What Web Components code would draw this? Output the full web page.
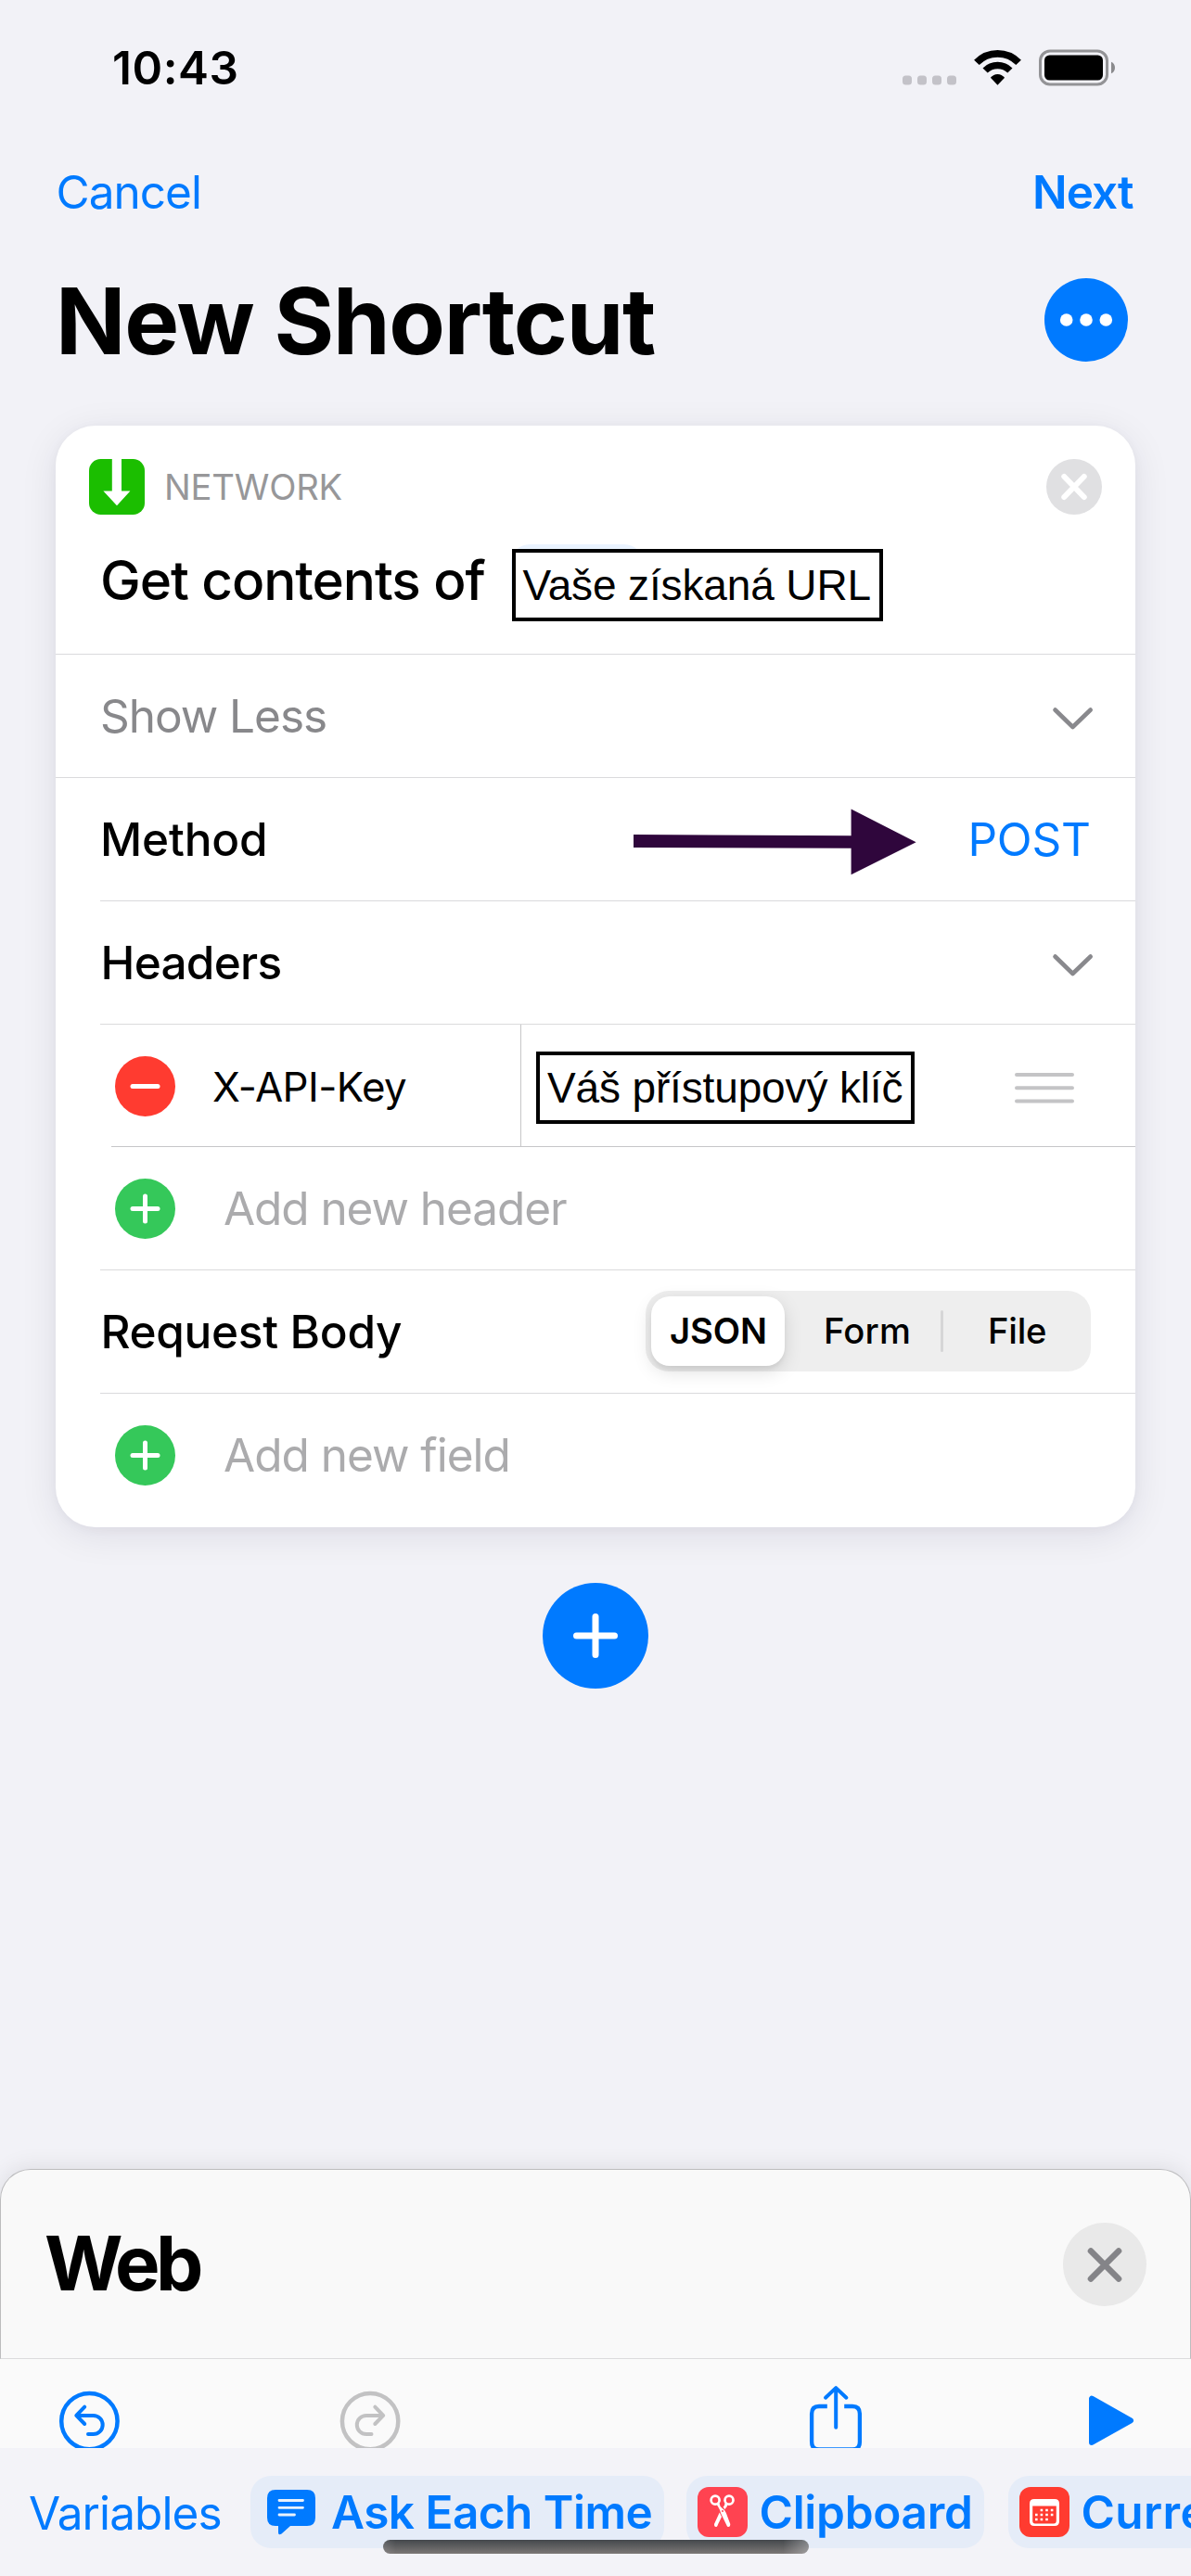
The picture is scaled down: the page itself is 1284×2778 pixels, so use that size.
<!DOCTYPE html>
<html lang="en">
<head>
<meta charset="utf-8">
<title>New Shortcut</title>
<style>
html,body{margin:0;padding:0;background:#f2f2f7}
body{font-family:Inter,"Liberation Sans",sans-serif;color:#000}
</style>
</head>
<body>
<shortcut-editor></shortcut-editor>
<script>
const define = (name, html, extra) => {
  const tpl = document.createElement('template');
  tpl.innerHTML = html;
  customElements.define(name, class extends HTMLElement {
    constructor() {
      super();
      this.attachShadow({ mode: 'open' }).appendChild(tpl.content.cloneNode(true));
    }
    connectedCallback() { if (extra) extra(this); }
  });
};

/* Single-line label whose glyphs span exactly `w` pixels, tracked by letter-spacing. */
const ruler = document.createElement('canvas').getContext('2d');
define('ui-text', `<style>
:host{display:block;flex:none;white-space:nowrap;line-height:1.2;font-size:49.5px;padding-top:2px}
:host([size=title]){font-size:99px;font-weight:700}
:host([size=sheet]){font-size:81.5px;font-weight:700;padding-top:0}
:host([size=summary]){font-size:58.5px;font-weight:500}
:host([size=field]){font-size:43.8px}
:host([size=small]){font-size:38.2px;padding-top:1px}
:host([size=note]){font-size:46px;font-family:"Liberation Sans",sans-serif}
:host([weight="500"]){font-weight:500}
:host([weight="600"]){font-weight:600}
:host([tone=blue]){color:#007aff}
:host([tone=gray]){color:#88888b}
:host([tone=soft]){color:#979799}
:host([tone=hint]){color:#ababad}
span{display:block}
</style><span><slot></slot></span>`, el => {
  const cs = getComputedStyle(el), text = el.textContent, w = +el.getAttribute('w');
  ruler.font = `${cs.fontWeight} ${cs.fontSize} ${cs.fontFamily}`;
  const m = ruler.measureText(text);
  const ink = m.actualBoundingBoxLeft + m.actualBoundingBoxRight;
  el.style.width = w + 'px';
  const span = el.shadowRoot.querySelector('span');
  span.style.marginLeft = m.actualBoundingBoxLeft + 'px';
  span.style.letterSpacing = ((w - ink) / (text.length - 1)).toFixed(3) + 'px';
});

define('status-bar', `<style>
:host{display:flex;height:145px;align-items:center;padding:0 82px 0 123px;box-sizing:border-box}
.right{margin-left:auto;display:flex;align-items:center}
svg{display:block}
</style>
<ui-text w="131.5" weight="600">10:43</ui-text>
<div class="right"><svg width="230" height="40" viewBox="972 52.5 230 40">
<g fill="#c3c2c8"><rect x="973" y="81" width="10" height="10" rx="3.5"/><rect x="989" y="81" width="10" height="10" rx="3.5"/><rect x="1005" y="81" width="10" height="10" rx="3.5"/><rect x="1021" y="81" width="10" height="10" rx="3.5"/></g>
<g fill="none" stroke="#000"><path stroke-width="7.8" d="M1052.9 66.9A31.4 31.4 0 0 1 1098.1 66.9"/><path stroke-width="7.4" d="M1062.1 75.5A19 19 0 0 1 1088.9 75.5"/></g>
<path d="M1075.5 91.2L1067.9 83.2Q1071 79.4 1075.5 79.4Q1080 79.4 1083.1 83.2Z"/>
<rect x="1121.5" y="54.5" width="72" height="36" rx="10.5" fill="none" stroke="#939396" stroke-width="3"/>
<rect x="1126" y="59" width="63" height="27" rx="5.5"/>
<path fill="#8a8a8d" d="M1198 66.2Q1202 68 1202 72.5Q1202 77 1198 78.8Z"/></svg></div>`);

define('nav-bar', `<style>
:host{display:flex;height:124px;align-items:center;justify-content:space-between;padding:0 62px 0 62.5px}
</style><ui-text w="152.5" tone="blue">Cancel</ui-text><ui-text w="106" tone="blue" weight="600">Next</ui-text>`);

define('title-bar', `<style>
:host{display:flex;height:152px;align-items:center;justify-content:space-between;padding:0 68px 0 66px}
svg{display:block}
</style><ui-text w="640" size="title">New Shortcut</ui-text>
<svg width="90" height="90"><circle cx="45" cy="45" r="45" fill="#007aff"/><g fill="#fff"><circle cx="23.7" cy="45" r="6.8"/><circle cx="45" cy="45" r="6.8"/><circle cx="66.3" cy="45" r="6.8"/></g></svg>`);

define('note-box', `<style>
:host{display:flex;flex:none;box-sizing:border-box;width:400px;height:78px;border:4px solid #000;background:#fff;align-items:center;padding:0 0 1px 8px}
:host([wide]){width:408px}
</style><slot></slot>`);

define('list-row', `<style>
:host{display:flex;flex:none;box-sizing:border-box;height:133px;align-items:center;margin-left:48px;border-bottom:1px solid #dadadc}
:host([full]){margin-left:0;padding-left:50px}
:host([last]){border-color:transparent}
:host([entry]){height:132px;margin-left:60px;border-color:#c6c6c8}
::slotted([end]){margin-left:auto}
</style><slot></slot>`);

define('chevron-down', `<style>:host{display:block;margin:5px 45px 0 0}svg{display:block}</style>
<svg width="46" height="28"><path d="M4.5 4.5L23.5 23L42.7 4.5" fill="none" stroke="#89898d" stroke-width="4.6" stroke-linecap="round" stroke-linejoin="round"/></svg>`);

define('round-mark', `<style>
:host{display:block;flex:none}svg{display:block}
circle{fill:#35c85a}.v{display:inline}
:host([minus]) circle{fill:#ff3b30}:host([minus]) .v{display:none}
</style><svg width="65" height="65"><circle cx="32.5" cy="32.5" r="32.5"/><g stroke="#fff" stroke-width="5" stroke-linecap="round"><path d="M19 32.5H46"/><path class="v" d="M32.5 19V46"/></g></svg>`);

define('segmented-control', `<style>
:host{display:flex;box-sizing:border-box;width:480px;height:87px;padding:6px;border-radius:25px;background:#eee;align-items:center;margin:0 48px 2px 0}
.on{display:flex;width:144px;height:75px;border-radius:20px;background:#fff;align-items:center;justify-content:center;box-shadow:0 6px 20px rgba(0,0,0,.13),0 4px 4px rgba(0,0,0,.05)}
.form{margin-left:45px}.file{margin-left:51px}
i{display:block;width:3px;height:45px;border-radius:2px;background:#d6d6d7;margin-left:34px}
</style><div class="on"><ui-text w="102" size="small" weight="600">JSON</ui-text></div>
<ui-text class="form" w="89" size="small" weight="500">Form</ui-text><i></i>
<ui-text class="file" w="59" size="small" weight="500">File</ui-text>`);

define('action-card', `<style>
:host{display:block;flex:none;width:1164px;height:1188px;margin:38px 60px 0;border-radius:43px;background:#fff;box-shadow:0 8px 40px rgba(20,10,50,.09),0 2px 12px rgba(20,10,50,.04)}
svg{display:block}
header{border-bottom:1px solid #dadadc;padding:36px 36px 0;height:210px}
.top{display:flex;height:60px;align-items:center}
.top ui-text{margin-left:24px}
.top svg:last-child{margin-left:auto}
.sum{display:flex;align-items:center;margin:37px 0 0 15px;height:78px}
.sum ui-text[size=summary]{margin-bottom:11px}
.url{position:relative;margin-left:28px}
.url::before{content:"";position:absolute;left:-1px;top:-5px;width:142px;height:74px;border-radius:20px;background:#eaf3ff}
.url note-box{position:relative}
.arrow{margin:6px 0 0 397px}
.post{margin-right:50px}
.key{display:flex;align-items:center;box-sizing:border-box;width:441px;padding:2px 0 0 4px}
.key ui-text{margin:2px 0 0 41px}
.val{display:flex;flex:1;align-self:stretch;align-items:center;border-left:1px solid #c6c6c8;padding:4px 66px 0 16px;margin-bottom:-1px}
.val svg{margin-left:auto}
</style>
<header>
<div class="top"><svg width="60" height="60"><rect width="60" height="60" rx="12.5" fill="#1bbe00"/><path d="M24.8 0H35V34.5H44.4L30 50.3L15.4 34.5H24.8Z" fill="#fff"/></svg>
<ui-text w="188.5" size="small" tone="soft">NETWORK</ui-text>
<svg width="60" height="60"><circle cx="30" cy="30" r="30" fill="#e0e0e2"/><path d="M19.3 19L40.7 41M40.7 19L19.3 41" stroke="#fff" stroke-width="6" stroke-linecap="round"/></svg></div>
<div class="sum"><ui-text w="412.5" size="summary">Get contents of</ui-text><div class="url"><note-box><ui-text w="375" size="note">Vaše získaná URL</ui-text></note-box></div></div>
</header>
<list-row full><ui-text w="241" tone="gray">Show Less</ui-text><chevron-down end></chevron-down></list-row>
<list-row><ui-text style="margin-left:3px" w="175" weight="500">Method</ui-text>
<svg class="arrow" width="306" height="72" viewBox="683 872 306 72"><path fill="#2f063c" d="M683 900L917.6 901.2V872.6L987.6 908.2L917.6 943.3V914.8L683 914Z"/></svg>
<ui-text end class="post" w="126.5" tone="blue">POST</ui-text></list-row>
<list-row><ui-text style="margin-left:3.5px" w="191" weight="500">Headers</ui-text><chevron-down end></chevron-down></list-row>
<list-row entry><div class="key"><round-mark minus></round-mark><ui-text w="208" size="field">X-API-Key</ui-text></div>
<div class="val"><note-box wide><ui-text w="382.5" size="note">Váš přístupový klíč</ui-text></note-box>
<svg width="64" height="36"><path d="M2 4H62M2 18.3H62M2 32.6H62" stroke="#c4c4c6" stroke-width="4" stroke-linecap="round"/></svg></div></list-row>
<list-row><round-mark style="margin-left:16px"></round-mark><ui-text style="margin-left:53px" w="369" tone="hint">Add new header</ui-text></list-row>
<list-row><ui-text style="margin-left:3.5px" w="321.5" weight="500">Request Body</ui-text><segmented-control end></segmented-control></list-row>
<list-row last><round-mark style="margin-left:16px"></round-mark><ui-text style="margin-left:53px" w="305.5" tone="hint">Add new field</ui-text></list-row>`);

define('add-button', `<style>:host{display:block;align-self:center;margin-top:60px}svg{display:block}</style>
<svg width="114" height="114"><circle cx="57" cy="57" r="57" fill="#007aff"/><path d="M36.5 57H77.5M57 36.5V77.5" stroke="#fff" stroke-width="7" stroke-linecap="round"/></svg>`);

define('search-sheet', `<style>
:host{display:flex;box-sizing:border-box;height:205px;margin-top:auto;align-items:center;justify-content:space-between;padding:1px 47px 0 49px;background:#f9f9f9;border:1px solid #bcbcbe;border-bottom-color:#dcdcdd;border-radius:33px 33px 0 0;box-shadow:0 -2px 24px rgba(0,0,0,.09)}
svg{display:block}
</style><ui-text w="168" size="sheet" style="margin:0 0 2px -1px">Web</ui-text>
<svg width="90" height="90"><circle cx="45" cy="45" r="45" fill="#e9e9e9"/><path d="M30 30.5L60 60.5M60 30.5L30 60.5" stroke="#848488" stroke-width="6.6" stroke-linecap="round"/></svg>`);

define('tool-bar', `<style>
:host{display:block;position:relative;height:96px;overflow:hidden;background:#fafafa}
div{display:flex;height:133px;align-items:center;padding-left:63px}
svg{display:block;flex:none;fill:none;stroke:#007aff;stroke-linecap:round;stroke-linejoin:round}
</style><div>
<svg width="66" height="80" viewBox="63 2570.5 66 80" stroke-width="4"><circle cx="96.4" cy="2610.6" r="30.2" stroke-width="4.5"/><path d="M91.2 2595.2L82.3 2604.4L91.2 2613.5M83 2604.4H100.6A10.1 10.1 0 0 1 100.6 2624.6H95"/></svg>
<svg width="66" height="80" viewBox="63 2570.5 66 80" stroke-width="4" style="margin-left:237px;stroke:#c2c2c3"><g transform="translate(192.5 0) scale(-1 1)"><circle cx="96.4" cy="2610.6" r="30.2" stroke-width="4.5"/><path d="M91.2 2595.2L82.3 2604.4L91.2 2613.5M83 2604.4H100.6A10.1 10.1 0 0 1 100.6 2624.6H95"/></g></svg>
<svg width="66" height="80" viewBox="868 2570.5 66 80" stroke-width="4" style="margin-left:436px"><path d="M901.2 2575V2617.2M890 2585.2L901.2 2574.6L912.4 2585.2"/><path stroke-linecap="butt" stroke-width="4.3" d="M891.8 2594.5H883Q875.1 2594.5 875.1 2602.5V2633Q875.1 2641 883 2641H919Q926.9 2641 926.9 2633V2602.5Q926.9 2594.5 919 2594.5H910.2"/></svg>
<svg width="66" height="80" viewBox="1165 2570.5 66 80" stroke-width="6" style="margin-left:231px"><path fill="#007aff" d="M1177 2586.2V2633.4L1219 2609.8Z"/></svg>
</div>`);

define('variable-chip', `<style>
:host{display:flex;flex:none;box-sizing:border-box;height:78px;border-radius:22px;background:#e5ecf8;align-items:center;padding-left:12px}
</style><slot></slot>`);

define('variable-bar', `<style>
:host{display:flex;position:relative;box-sizing:border-box;height:138px;padding:30px 0 0 32px;overflow:hidden;background:#f3f3f8;align-items:flex-start}
svg{display:block;flex:none}
.vars{margin-top:8.5px}
.home{position:absolute;left:413px;top:99px;width:459px;height:15px;border-radius:7.5px;background:linear-gradient(90deg,rgba(243,243,248,.12),transparent 3%,transparent 94%,rgba(243,243,248,.32)),linear-gradient(#44484c,#7b7776)}
</style>
<ui-text class="vars" w="205.5" tone="blue">Variables</ui-text>
<variable-chip style="width:446px;margin-left:32.5px;padding-left:18px"><svg width="52" height="49"><path fill="#007aff" d="M9 0H43Q52 0 52 9V30Q52 39 43 39H25L15.5 47.5Q12 49.5 12 46V39H9Q0 39 0 30V9Q0 0 9 0Z"/><path d="M13 11.5H38.5M13 19.3H38.5M13 27H29.5" stroke="#e9f1fc" stroke-width="2.8" stroke-linecap="round"/></svg><ui-text style="margin-left:18px" w="344.5" tone="blue" weight="600">Ask Each Time</ui-text></variable-chip>
<variable-chip style="width:321px;margin-left:24px"><svg width="54" height="54"><rect width="54" height="54" rx="12" fill="#ff4351"/><g fill="none" stroke="#fff" stroke-width="2.7"><circle cx="19.1" cy="14.2" r="4.5"/><circle cx="34" cy="14.2" r="4.5"/></g><path fill="#fff" d="M20.5 18.5L23.5 17.5Q24 21.5 27 23.2Q30 25 30.8 28L35.3 40Q35.3 43.5 32.7 43Q31.8 42.7 31 40.5L25.2 28.5Q24.5 25 22.8 22.5ZM32.6 18.5L29.6 17.5Q29.3 20 27.6 21.8L29.7 24.2Q30 22.5 31.4 21.7ZM23.7 27.4L18 40Q17.8 43.5 20.5 43Q21.5 42.5 22.2 40L26 32.2Z"/><circle cx="27" cy="26" r="1" fill="#ff4351"/></svg><ui-text style="margin-left:14.5px" w="225.5" tone="blue" weight="600">Clipboard</ui-text></variable-chip>
<variable-chip style="width:396px;margin-left:26px"><svg width="54" height="54"><rect width="54" height="54" rx="12" fill="#ff3b30"/><path fill="#fff" fill-rule="evenodd" d="M16 13H38Q43 13 43 18V37Q43 42 38 42H16Q11 42 11 37V18Q11 13 16 13ZM14.2 20.6V36.5Q14.2 39.5 17 39.5H37Q39.8 39.5 39.8 36.5V20.6Z"/><g fill="#fff"><path d="M22.6 23.8h2.6v2.4h-2.6zM28.2 23.8h2.6v2.4h-2.6zM33.8 23.8h2.6v2.4h-2.6zM17 28.8h2.6v2.4H17zM22.6 28.8h2.6v2.4h-2.6zM28.2 28.8h2.6v2.4h-2.6zM33.8 28.8h2.6v2.4h-2.6zM17 33.8h2.6v2.4H17zM22.6 33.8h2.6v2.4h-2.6zM28.2 33.8h2.6v2.4h-2.6z"/></g></svg><ui-text style="margin-left:14.5px" w="306" tone="blue" weight="600">Current Date</ui-text></variable-chip>
<div class="home"></div>`);

define('shortcut-editor', `<style>
:host{display:flex;flex-direction:column;width:1284px;height:2778px;overflow:hidden;background:#f2f2f7}
</style>
<status-bar></status-bar>
<nav-bar></nav-bar>
<title-bar></title-bar>
<action-card></action-card>
<add-button></add-button>
<search-sheet></search-sheet>
<tool-bar></tool-bar>
<variable-bar></variable-bar>`);
</script>
</body>
</html>
